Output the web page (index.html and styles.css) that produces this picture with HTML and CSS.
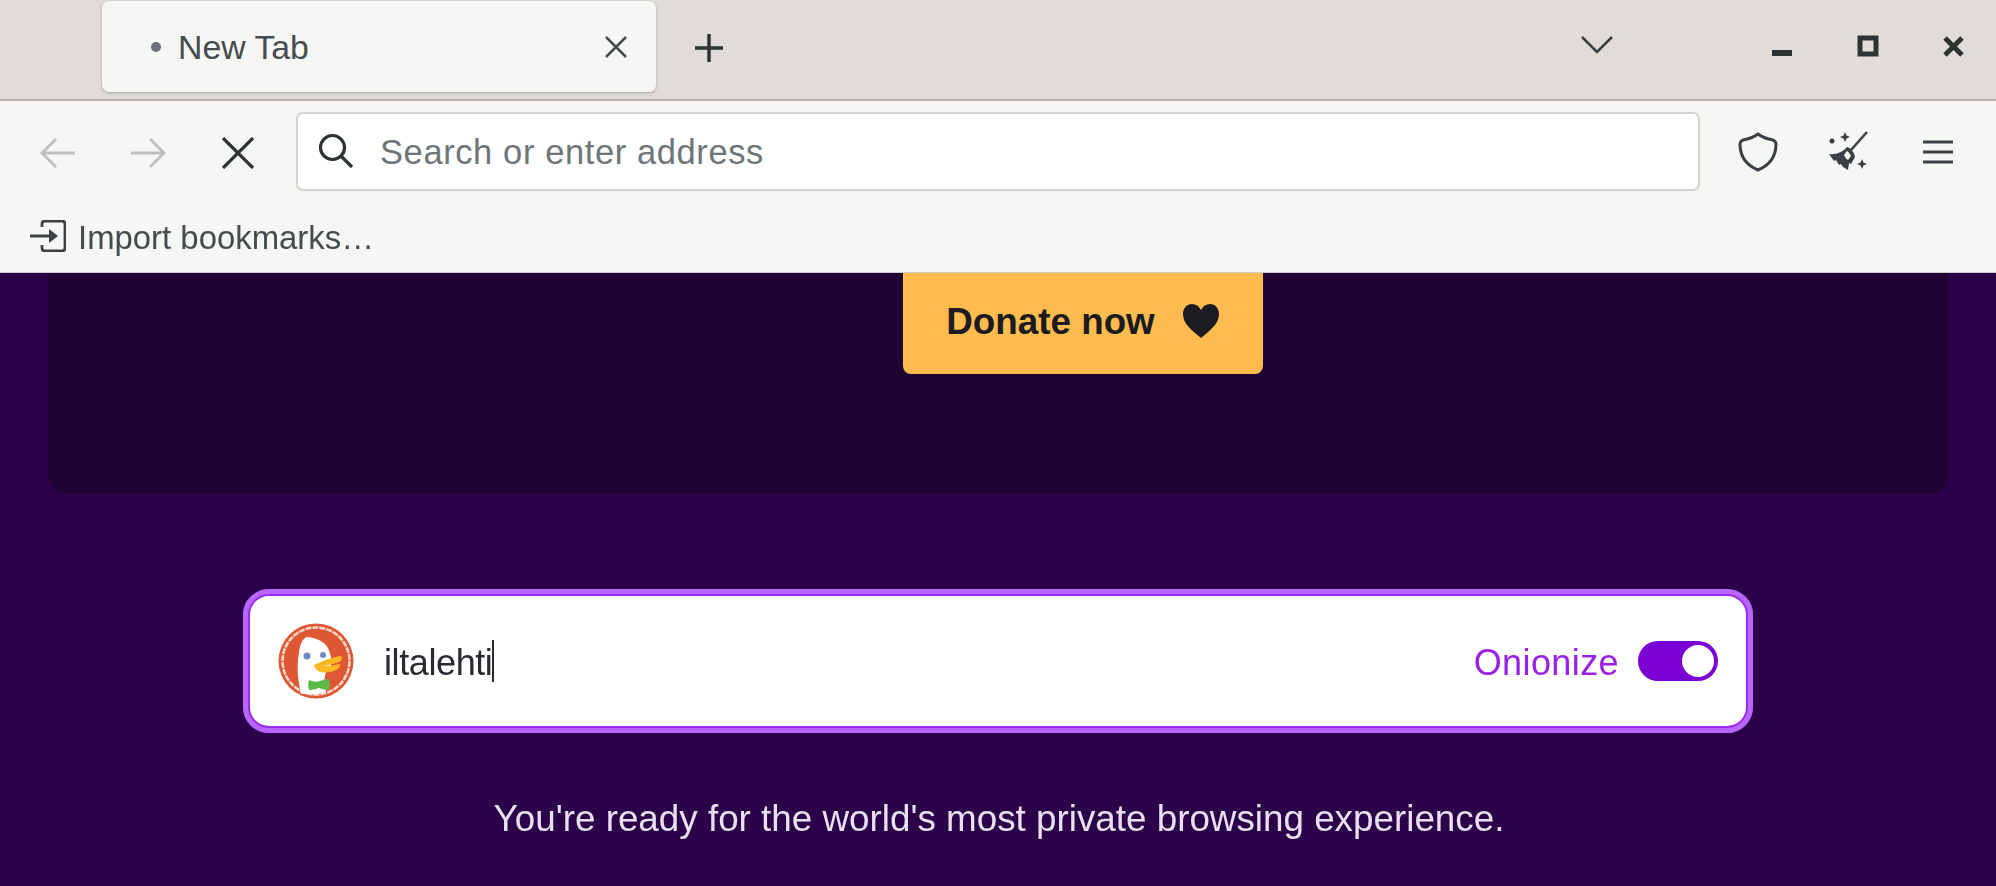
FILE: index.html
```html
<!DOCTYPE html>
<html lang="en">
<head>
<meta charset="utf-8">
<title>New Tab</title>
<link rel="stylesheet" href="styles.css">
</head>
<body>
<header class="chrome">
  <div class="tabbar">
    <div class="tab">
      <span class="tab-dot"></span>
      <span class="tab-title">New Tab</span>
      <svg class="tab-close" viewBox="0 0 24 22"><path d="M2 1l20 20M22 1L2 21"/></svg>
    </div>
    <svg class="newtab" viewBox="0 0 30 30"><path d="M15 1v28M1 15h28"/></svg>
    <div class="spacer"></div>
    <svg class="chevron" viewBox="0 0 32 20"><path d="M1 2l15 15L31 2"/></svg>
    <div class="winctl">
      <svg class="win" viewBox="0 0 22 22"><rect x="1" y="15" width="20" height="6"/></svg>
      <svg class="win" viewBox="0 0 22 22"><path class="win-box" d="M3 3h16v16H3z"/></svg>
      <svg class="win" viewBox="0 0 22 22"><path class="win-x" d="M2 3l17 17M19 3L2 20"/></svg>
    </div>
  </div>
  <div class="navbar">
    <svg class="nav-ic dim" viewBox="0 0 36 32"><path d="M35 16H2M16 2L2 16l14 14"/></svg>
    <svg class="nav-ic dim fwd" viewBox="0 0 36 32"><path d="M1 16h33M20 2l14 14-14 14"/></svg>
    <svg class="nav-ic stop" viewBox="0 0 36 32"><path d="M3 1l30 30M33 1L3 31"/></svg>
    <div class="urlbar">
      <svg class="search-ic" viewBox="0 0 36 36"><circle cx="14.500" cy="14.500" r="12"/><path d="M23 23l11 11"/></svg>
      <span class="url-ph">Search or enter address</span>
    </div>
    <svg class="tool shield" viewBox="0 0 40 40"><path d="M20 2c4 3 9 5 15 6 2 1 3 2 3 4 0 12-6 21-18 26C8 33 2 24 2 12c0-2 1-3 3-4 6-1 11-3 15-6z"/></svg>
    <svg class="tool broom" viewBox="0 0 42 42">
      <path class="broom-s" d="M40 1L24 19"/>
      <path class="broom-f" d="M20 16c4 1 7 5 8 10l-4 7-2-1-1 7-5-3-2-3-2 1-3-5-2 1-5-7c7 1 14-2 18-7z"/>
      <path class="broom-l" d="M20 20c2 1 3 3 4 5l-3 4c-2-1-3-3-4-5z"/>
      <path class="broom-f" d="M18 1l1.500 3.500L23 6l-3.500 1.500L18 11l-1.500-3.500L13 6l3.500-1.500zM35 28l1.500 3.500L40 33l-3.500 1.500L35 38l-1.500-3.500L30 33l3.500-1.500z"/>
      <circle class="broom-f" cx="5" cy="10" r="2.500"/>
    </svg>
    <svg class="tool menu" viewBox="0 0 30 24"><path d="M0 2h30M0 12h30M0 22h30"/></svg>
  </div>
  <div class="bookmarks">
    <svg class="import-ic" viewBox="0 0 36 32"><path d="M12 7V4q0-3 3-3h17q3 0 3 3v24q0 3-3 3H15q-3 0-3-3v-3M0 16h20"/><path class="import-f" d="M19 9l9 7-9 7z"/></svg>
    <span class="import-label">Import bookmarks…</span>
  </div>
</header>
<main class="page">
  <section class="card">
    <a class="donate"><span>Donate now</span>
      <svg class="heart" viewBox="0 0 38 34"><path d="M19 34C8 25 1 19 1 10 1 4 5 0 10 0c4 0 7 2 9 6 2-4 5-6 9-6 5 0 9 4 9 10 0 9-7 15-18 24z"/></svg>
    </a>
  </section>
  <div class="searchbox">
    <svg class="ddg" viewBox="0 0 76 76">
      <circle cx="38" cy="38" r="37.500" fill="#de5833"/>
      <circle cx="38" cy="38" r="33.500" fill="none" stroke="#f7d9cf" stroke-width="2.500" stroke-dasharray="6 1"/>
      <path d="M23 70C19 55 19 40 21 30c0-5 2-10 4-13l3-3c9 0 18 4 22 11 3 6 4 12 3 18l-5 6c-2 6-2 12 0 20-9 3-19 3-28 1z" fill="#fff"/>
      <circle cx="29" cy="33" r="3.500" fill="#6f8ac6"/>
      <circle cx="45" cy="32" r="3" fill="#6f8ac6"/>
      <path d="M36 42c7-3 18-8 27-9 2 3 0 6-5 7l-12 3c5 0 11-1 16-2 1 3-3 7-10 8-6 1-14 1-16-7z" fill="#fdb81f"/>
      <path d="M31 57c5 2 8 2 11 1 3-1 6-2 9-2 1 3 1 8 0 11-4 0-7-1-10-2-3 1-6 2-10 2-1-3-1-7 0-10z" fill="#5cb947"/>
    </svg>
    <span class="query">iltalehti</span><span class="caret"></span>
    <div class="spacer"></div>
    <span class="onion">Onionize</span>
    <span class="toggle"><span class="knob"></span></span>
  </div>
  <p class="ready">You're ready for the world's most private browsing experience.</p>
</main>
</body>
</html>
```
FILE: styles.css
```css
* { box-sizing: border-box; }
html, body { margin: 0; height: 100%; overflow: hidden; }
body {
  width: 1996px; height: 886px;
  background: #2b0249;
  font-family: "Liberation Sans", Arial, sans-serif;
  display: flex; flex-direction: column;
  filter: blur(.6px);
}
svg { display: block; flex: none; }
.spacer { flex: 1; }

.chrome { flex: none; background: #f6f6f4; border-bottom: 1px solid #cfcdc9; }
.tabbar {
  height: 101px; background: #e0dcd9;
  border-bottom: 2px solid #b5b2ae;
  display: flex; align-items: flex-start;
  padding-left: 102px;
}
.tab {
  width: 554px; height: 91px; margin-top: 1px;
  background: #f6f6f4; border-radius: 7px;
  box-shadow: 0 1px 3px rgba(0,0,0,.25);
  display: flex; align-items: center;
  padding-left: 49px;
  color: #454c50;
}
.tab-dot { width: 10px; height: 10px; border-radius: 50%; background: #6d7376; margin-right: 17px; }
.tab-title { font-size: 33.800px; flex: 1; padding-top: 2px; }
.tab-close { width: 24px; height: 22px; margin-right: 28px; fill: none; stroke: #454c50; stroke-width: 2.500; }
.newtab { width: 30px; height: 30px; margin: 33px 0 0 38px; fill: none; stroke: #2e3436; stroke-width: 3.500; }
.chevron { width: 32px; height: 20px; margin: 35px 158px 0 0; fill: none; stroke: #3a4043; stroke-width: 2.600; }
.winctl { display: flex; gap: 64px; margin: 35px 31px 0 0; }
.win { width: 22px; height: 22px; }
.win rect { fill: #2e3436; }
.win-box { fill: none; stroke: #2e3436; stroke-width: 5; }
.win-x { fill: none; stroke: #2e3436; stroke-width: 5; }

.navbar {
  height: 104px;
  display: flex; align-items: center;
  padding-left: 40px;
}
.nav-ic { width: 36px; height: 32px; fill: none; stroke-width: 2.800; }
.dim { stroke: #bcc0c0; }
.fwd { margin-left: 54px; }
.stop { margin-left: 54px; stroke: #2e3436; stroke-width: 3.200; }
.urlbar {
  width: 1404px; height: 79px; margin: -4px 0 0 40px;
  background: #fff; border: 2px solid #d6d3cf; border-radius: 7px;
  display: flex; align-items: center;
  padding-left: 20px;
}
.search-ic { width: 36px; height: 36px; fill: none; stroke: #2e3436; stroke-width: 3.200; }
.url-ph { margin-left: 26px; font-size: 34.500px; letter-spacing: .6px; color: #6e7478; padding-top: 2px; }
.tool { flex: none; fill: none; stroke: #3a4043; margin-top: -3px; }
.shield { width: 40px; height: 40px; margin-left: 38px; stroke-width: 3; }
.broom { width: 42px; height: 42px; margin-left: 49px; stroke: none; }
.broom-s { fill: none; stroke: #3a4043; stroke-width: 2.600; }
.broom-f { fill: #3a4043; stroke: none; }
.broom-l { fill: #f6f6f4; stroke: none; }
.menu { width: 30px; height: 24px; margin-left: 54px; stroke-width: 3; }

.bookmarks {
  height: 67px; padding: 0 0 6px 30px;
  display: flex; align-items: center;
  color: #454c50;
}
.import-ic { width: 36px; height: 32px; fill: none; stroke: #3a4043; stroke-width: 2.800; }
.import-f { fill: #3a4043; stroke: none; }
.import-label { margin-left: 12px; font-size: 32.900px; padding-top: 4px; }

.page { flex: 1; display: flex; flex-direction: column; align-items: center; overflow: hidden; }
.card {
  width: 1900px; height: 221px;
  background: #1f0333;
  border-radius: 0 0 20px 20px;
  display: flex; justify-content: flex-start;
  padding-left: 855px;
  flex: none;
}
.donate {
  width: 360px; height: 101px;
  background: #ffbb4e;
  border-radius: 0 0 8px 8px;
  display: flex; align-items: center; justify-content: center; gap: 27px;
  font-size: 36.800px; font-weight: 700; color: #1c1b22;
}
.donate span { margin-bottom: 4px; }
.heart { width: 38px; height: 34px; fill: #1c1b22; margin-bottom: 5px; }
.searchbox {
  width: 1510px; height: 144px; margin-top: 95px;
  background: #fff;
  border: 7px solid #9c2bf0;
  outline: 5px solid #b866ff; outline-offset: -5px;
  border-radius: 26px;
  display: flex; align-items: center;
  padding: 0 28px 0 28px;
  flex: none;
}
.ddg { width: 76px; height: 76px; }
.query { margin-left: 30px; font-size: 36px; letter-spacing: -.4px; color: #2b2a33; padding-top: 3px; }
.caret { width: 2px; height: 42px; background: #2b2a33; }
.onion { font-size: 36px; letter-spacing: .4px; color: #9a1fe8; margin-right: 19px; padding-top: 3px; }
.toggle {
  width: 80px; height: 40px; border-radius: 20px; background: #7a00d4;
  display: flex; align-items: center; justify-content: flex-end; padding-right: 4px;
}
.knob { width: 32px; height: 32px; border-radius: 50%; background: #fff; }
.ready { margin: 65px 0 0 2px; font-size: 36.800px; color: #e9e0ef; white-space: nowrap; }
```
